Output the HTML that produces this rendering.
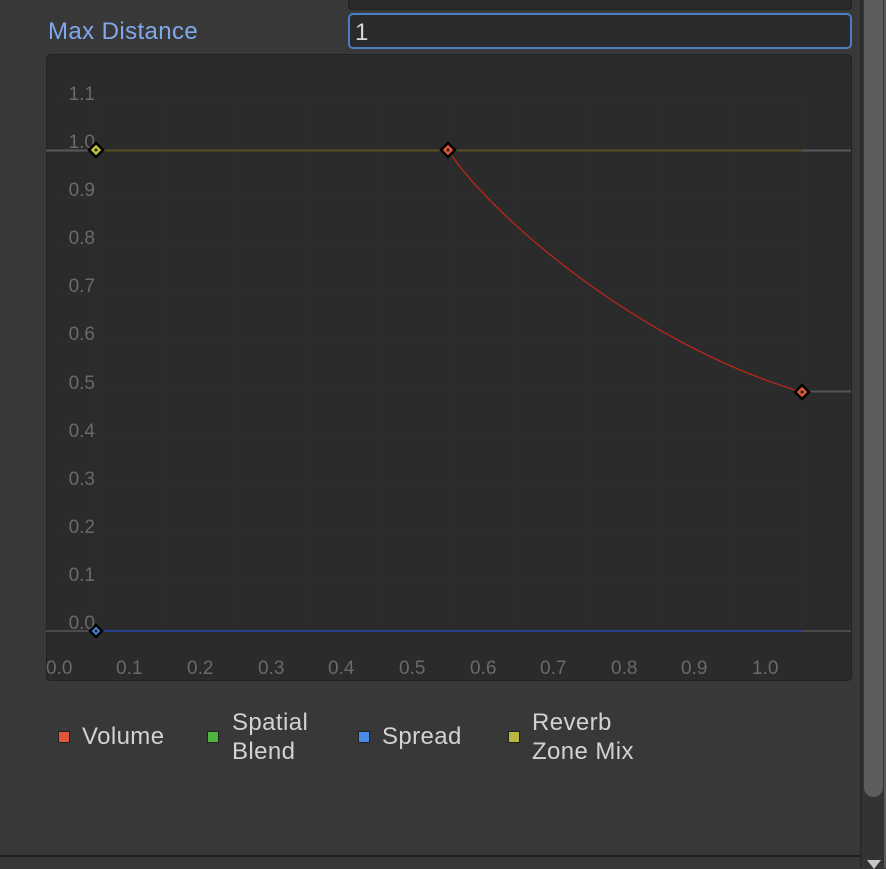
<!DOCTYPE html>
<html><head><style>
html,body{margin:0;padding:0;width:886px;height:868px;background:#383838;overflow:hidden;font-family:"Liberation Sans",sans-serif;}
.abs{position:absolute;}
</style></head><body>
<div class="abs" style="left:348px;top:-10px;width:502px;height:18px;background:#2a2a2a;border:1px solid #212121;border-radius:4px;"></div>
<div class="abs" style="left:48px;top:18px;font-size:24px;letter-spacing:0.4px;color:#7fa8ec;">Max Distance</div>
<div class="abs" style="left:348px;top:13px;width:500px;height:32px;background:#2a2a2a;border:2px solid #4a7fc6;border-radius:5px;"></div>
<div class="abs" style="left:355px;top:19px;font-size:24px;color:#d8d8d8;">1</div>

<div class="abs" style="left:860px;top:0;width:2px;height:868px;background:#2a2a2a;"></div>
<div class="abs" style="left:862px;top:0;width:22px;height:868px;background:#333;"></div>
<div class="abs" style="left:864px;top:0;width:19px;height:797px;background:#5d5d5d;border-radius:0 0 10px 10px;"></div>
<div class="abs" style="left:884px;top:0;width:2px;height:868px;background:#5a5a5a;"></div>
<div class="abs" style="left:867px;top:860px;width:0;height:0;border-left:7px solid transparent;border-right:7px solid transparent;border-top:9px solid #c8c8c8;"></div>
<div class="abs" style="left:0;top:855px;width:860px;height:2px;background:#1e1e1e;"></div>

<svg class="abs" style="left:0;top:0" width="886" height="868">
<rect x="46.5" y="54.5" width="805" height="626" rx="4" fill="#2b2b2b" stroke="#222" />
<g stroke="#2e2e2e" stroke-width="1">
<line x1="96" y1="103" x2="96" y2="631"/><line x1="166.6" y1="103" x2="166.6" y2="631"/><line x1="237.2" y1="103" x2="237.2" y2="631"/><line x1="307.8" y1="103" x2="307.8" y2="631"/><line x1="378.4" y1="103" x2="378.4" y2="631"/><line x1="449" y1="103" x2="449" y2="631"/><line x1="519.6" y1="103" x2="519.6" y2="631"/><line x1="590.2" y1="103" x2="590.2" y2="631"/><line x1="660.8" y1="103" x2="660.8" y2="631"/><line x1="731.4" y1="103" x2="731.4" y2="631"/><line x1="802" y1="103" x2="802" y2="631"/>
<line x1="56" y1="103" x2="806" y2="103"/><line x1="56" y1="198" x2="806" y2="198"/><line x1="56" y1="246" x2="806" y2="246"/><line x1="56" y1="294" x2="806" y2="294"/><line x1="56" y1="342" x2="806" y2="342"/><line x1="56" y1="390" x2="806" y2="390"/><line x1="56" y1="438" x2="806" y2="438"/><line x1="56" y1="486" x2="806" y2="486"/><line x1="56" y1="535" x2="806" y2="535"/><line x1="56" y1="583" x2="806" y2="583"/>
</g>
<g font-size="19" fill="#6a6a6a" text-anchor="end">
<text x="95" y="100">1.1</text><text x="95" y="148">1.0</text><text x="95" y="196">0.9</text><text x="95" y="244">0.8</text><text x="95" y="292">0.7</text><text x="95" y="340">0.6</text><text x="95" y="389">0.5</text><text x="95" y="437">0.4</text><text x="95" y="485">0.3</text><text x="95" y="533">0.2</text><text x="95" y="581">0.1</text><text x="95" y="629">0.0</text>
</g>
<g font-size="19" fill="#6a6a6a">
<text x="46" y="674">0.0</text><text x="116" y="674">0.1</text><text x="187" y="674">0.2</text><text x="258" y="674">0.3</text><text x="328" y="674">0.4</text><text x="399" y="674">0.5</text><text x="470" y="674">0.6</text><text x="540" y="674">0.7</text><text x="611" y="674">0.8</text><text x="681" y="674">0.9</text><text x="752" y="674">1.0</text>
</g>
<line x1="46" y1="150.5" x2="851" y2="150.5" stroke="#585858" stroke-width="2"/>
<line x1="96" y1="150.5" x2="802" y2="150.5" stroke="#55521f" stroke-width="2"/>
<line x1="46" y1="631" x2="851" y2="631" stroke="#4a4a4a" stroke-width="2"/>
<line x1="96" y1="631" x2="802" y2="631" stroke="#26408e" stroke-width="2"/>
<line x1="802" y1="391.5" x2="851" y2="391.5" stroke="#555" stroke-width="2"/>
<path d="M448 150 C490 215 640 345 802 392" fill="none" stroke="#b8261c" stroke-width="1.3"/>
<g stroke="#000" stroke-width="2.5">
<path d="M96 143 L103 150 L96 157 L89 150Z" fill="#c4c43a"/>
<path d="M448 143 L455 150 L448 157 L441 150Z" fill="#e0563a"/>
<path d="M802 385 L809 392 L802 399 L795 392Z" fill="#e0563a"/>
<path d="M96 625 L102 631 L96 637 L90 631Z" fill="#4a8ae8"/>
</g>
<g fill="#222"><circle cx="96" cy="150" r="1.5"/><circle cx="448" cy="150" r="1.5"/><circle cx="802" cy="392" r="1.5"/><circle cx="96" cy="631" r="1.5"/></g>
</svg>

<div class="abs" style="left:58px;top:731px;width:10px;height:10px;background:#e0563a;border:1px solid #222;"></div>
<div class="abs" style="left:82px;top:723px;font-size:24px;letter-spacing:0.4px;color:#d2d2d2;">Volume</div>
<div class="abs" style="left:207px;top:731px;width:10px;height:10px;background:#4fb33e;border:1px solid #222;"></div>
<div class="abs" style="left:232px;top:708px;font-size:24px;letter-spacing:0.4px;line-height:29px;color:#d2d2d2;">Spatial<br>Blend</div>
<div class="abs" style="left:358px;top:731px;width:10px;height:10px;background:#4a8ae8;border:1px solid #222;"></div>
<div class="abs" style="left:382px;top:723px;font-size:24px;letter-spacing:0.4px;color:#d2d2d2;">Spread</div>
<div class="abs" style="left:508px;top:731px;width:10px;height:10px;background:#b8b840;border:1px solid #222;"></div>
<div class="abs" style="left:532px;top:708px;font-size:24px;letter-spacing:0.4px;line-height:29px;color:#d2d2d2;">Reverb<br>Zone Mix</div>
</body></html>
